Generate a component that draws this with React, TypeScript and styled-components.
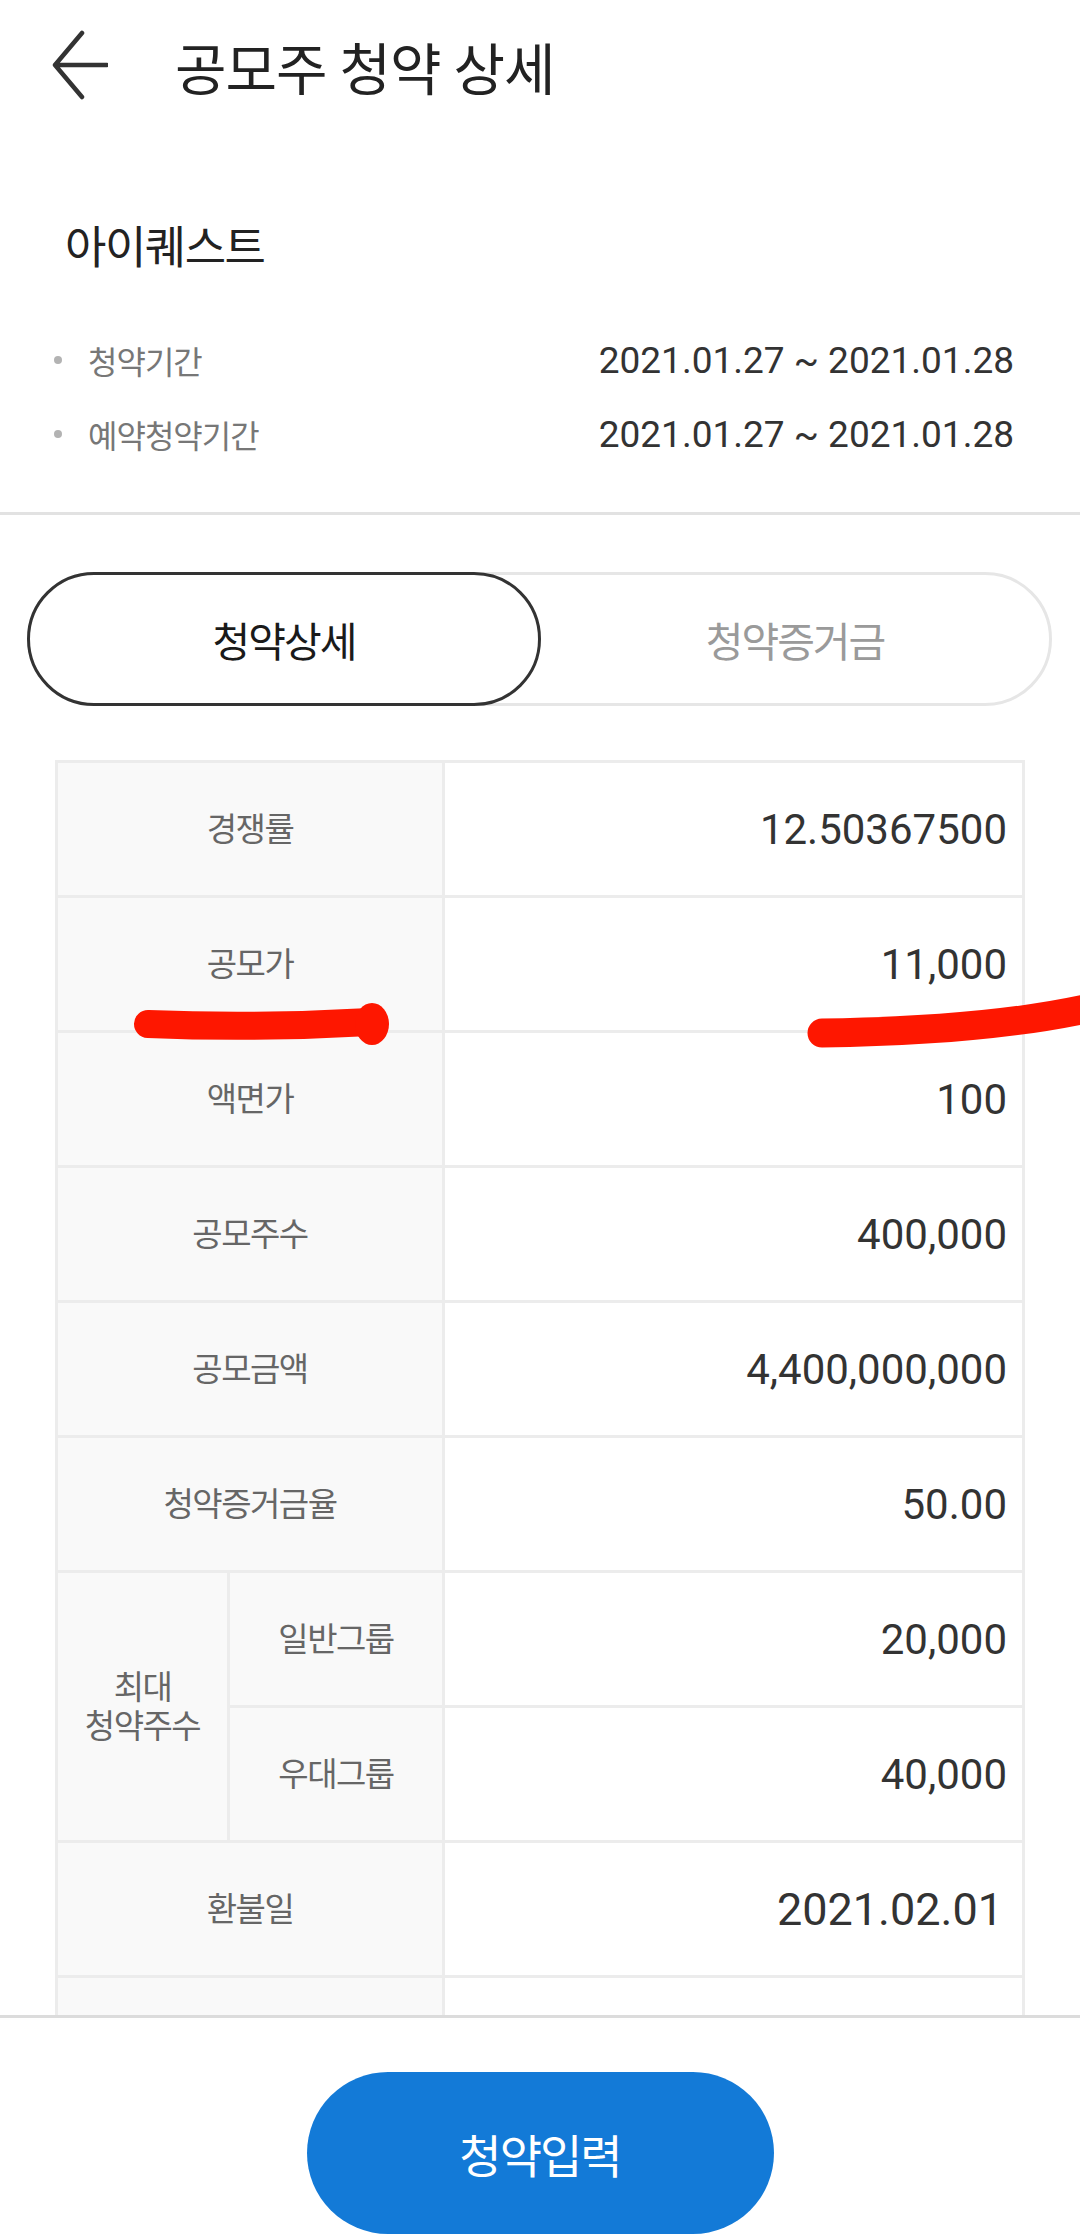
import styled, { createGlobalStyle } from 'styled-components';

const GlobalStyle = createGlobalStyle`
  html, body {
    margin: 0;
    padding: 0;
    background: #fff;
  }
  body {
    font-family: Roboto, "Noto Sans CJK KR", sans-serif;
    color: #222;
  }
  * {
    box-sizing: border-box;
  }
`;

type Row = {
  label: string;
  value: string;
  big?: boolean;
};

const topRows: Row[] = [
  { label: '경쟁률', value: '12.50367500' },
  { label: '공모가', value: '11,000' },
  { label: '액면가', value: '100' },
  { label: '공모주수', value: '400,000' },
  { label: '공모금액', value: '4,400,000,000' },
  { label: '청약증거금율', value: '50.00' },
];

const groupRows: Row[] = [
  { label: '일반그룹', value: '20,000' },
  { label: '우대그룹', value: '40,000' },
];

const periods = [
  { label: '청약기간', value: '2021.01.27 ~ 2021.01.28' },
  { label: '예약청약기간', value: '2021.01.27 ~ 2021.01.28' },
];

const BackIcon = () => (
  <svg width="56" height="70" viewBox="0 0 56 70" fill="none">
    <path
      d="M30 3 L3 35 L30 67 M3 35 H55"
      stroke="#333"
      strokeWidth="4.5"
      strokeLinecap="round"
      strokeLinejoin="round"
    />
  </svg>
);

// 손으로 그린 빨간 밑줄 (스크린샷 위 표시)
const Marks = () => (
  <MarkLayer width="1080" height="2235" viewBox="0 0 1080 2235">
    <path
      d="M148 1024 C 220 1027, 300 1026, 370 1022"
      stroke="#fe1700"
      strokeWidth="28"
      strokeLinecap="round"
      fill="none"
    />
    <ellipse cx="372" cy="1024" rx="17" ry="21" fill="#fe1700" />
    <path
      d="M822 1033 C 900 1032, 1000 1028, 1090 1008"
      stroke="#fe1700"
      strokeWidth="29"
      strokeLinecap="round"
      fill="none"
    />
  </MarkLayer>
);

const App = () => {
  return (
    <>
      <GlobalStyle />
      <Page>
        <Content>
          <Header>
            <BackButton aria-label="뒤로">
              <BackIcon />
            </BackButton>
            <Title>공모주 청약 상세</Title>
          </Header>

          <InfoSection>
            <CompanyName>아이퀘스트</CompanyName>
            {periods.map(p => (
              <PeriodRow key={p.label}>
                <PeriodLabel>
                  <Bullet />
                  {p.label}
                </PeriodLabel>
                <PeriodValue>{p.value}</PeriodValue>
              </PeriodRow>
            ))}
          </InfoSection>

          <Tabs>
            <Tab $active>청약상세</Tab>
            <Tab>청약증거금</Tab>
          </Tabs>

          <Table>
            {topRows.map(r => (
              <MainRow key={r.label} row={r} />
            ))}

            <LabelCell $rows={2}>
              최대
              <br />
              청약주수
            </LabelCell>
            {groupRows.map(r => (
              <SubRow key={r.label} row={r} />
            ))}

            <LabelCell $span={2}>환불일</LabelCell>
            <ValueCell $big>2021.02.01</ValueCell>

            <LabelCell $span={2} />
            <ValueCell />
          </Table>
        </Content>

        <Footer>
          <SubmitButton>청약입력</SubmitButton>
        </Footer>

        <Marks />
      </Page>
    </>
  );
};

const MainRow = ({ row }: { row: Row }) => (
  <>
    <LabelCell $span={2}>{row.label}</LabelCell>
    <ValueCell $big={row.big}>{row.value}</ValueCell>
  </>
);

const SubRow = ({ row }: { row: Row }) => (
  <>
    <LabelCell>{row.label}</LabelCell>
    <ValueCell>{row.value}</ValueCell>
  </>
);

export default App;

const Page = styled.div`
  position: relative;
  display: flex;
  flex-direction: column;
  width: 100%;
  height: 100vh;
  overflow: hidden;
`;

const Content = styled.div`
  flex: 1;
  min-height: 0;
  overflow: hidden;
`;

const Header = styled.header`
  display: flex;
  align-items: center;
  gap: 67px;
  height: 130px;
  padding-left: 52px;
`;

const BackButton = styled.button`
  display: flex;
  align-items: center;
  padding: 0;
  border: none;
  background: none;
`;

const Title = styled.h1`
  margin: 0;
  font-size: 56px;
  font-weight: 400;
  color: #222;
  letter-spacing: -1px;
`;

const InfoSection = styled.section`
  padding: 87px 66px 41px 54px;
  border-bottom: 3px solid #e2e2e2;
`;

const CompanyName = styled.h2`
  margin: 0 0 42px 11px;
  font-size: 45px;
  line-height: 64px;
  font-weight: 400;
  color: #222;
  letter-spacing: -1.5px;
`;

const PeriodRow = styled.div`
  display: flex;
  align-items: center;
  justify-content: space-between;
  height: 74px;
`;

const PeriodLabel = styled.span`
  display: flex;
  align-items: center;
  font-size: 32px;
  color: #777;
  letter-spacing: -1px;
`;

const Bullet = styled.i`
  width: 8px;
  height: 8px;
  margin-right: 26px;
  border-radius: 50%;
  background: #b3b3b3;
`;

const PeriodValue = styled.span`
  font-size: 37px;
  color: #333;
`;

const Tabs = styled.div`
  display: flex;
  height: 134px;
  margin: 57px 28px 0 27px;
  border: 3px solid #e6e6e6;
  border-radius: 67px;
`;

const Tab = styled.div<{ $active?: boolean }>`
  flex: 1 1 0;
  display: flex;
  align-items: center;
  justify-content: center;
  font-size: 41px;
  letter-spacing: -2px;
  font-weight: 400;
  color: ${({ $active }) => ($active ? '#1a1a1a' : '#9a9a9a')};
  ${({ $active }) =>
    $active &&
    `
    margin: -3px 0 -3px -3px;
    border: 3px solid #333;
    border-radius: 67px;
  `}
`;

const Table = styled.div`
  display: grid;
  grid-template-columns: 169px 212px 1fr;
  grid-auto-rows: 132px;
  gap: 3px;
  margin: 54px 55px 0;
  padding: 3px;
  background: #ececec;
`;

const LabelCell = styled.div<{ $span?: number; $rows?: number }>`
  grid-column: span ${({ $span }) => $span ?? 1};
  grid-row: span ${({ $rows }) => $rows ?? 1};
  display: flex;
  align-items: center;
  justify-content: center;
  text-align: center;
  background: #f9f9f9;
  font-size: 33px;
  line-height: 39px;
  color: #666;
  letter-spacing: -1.5px;
`;

const ValueCell = styled.div<{ $big?: boolean }>`
  display: flex;
  align-items: center;
  justify-content: flex-end;
  padding-right: ${({ $big }) => ($big ? 19 : 15)}px;
  background: #fff;
  font-size: ${({ $big }) => ($big ? 45 : 42)}px;
  color: #333;
`;

const Footer = styled.footer`
  flex: 0 0 220px;
  display: flex;
  justify-content: center;
  padding-top: 54px;
  border-top: 3px solid #dcdcdc;
  background: #fff;
`;

const SubmitButton = styled.button`
  width: 467px;
  height: 162px;
  border: none;
  border-radius: 81px;
  background: #137ad7;
  color: #fff;
  font-family: Roboto, "Noto Sans CJK KR", sans-serif;
  font-size: 46px;
  font-weight: 400;
  letter-spacing: -2px;
`;

const MarkLayer = styled.svg`
  position: absolute;
  top: 0;
  left: 0;
  pointer-events: none;
`;
